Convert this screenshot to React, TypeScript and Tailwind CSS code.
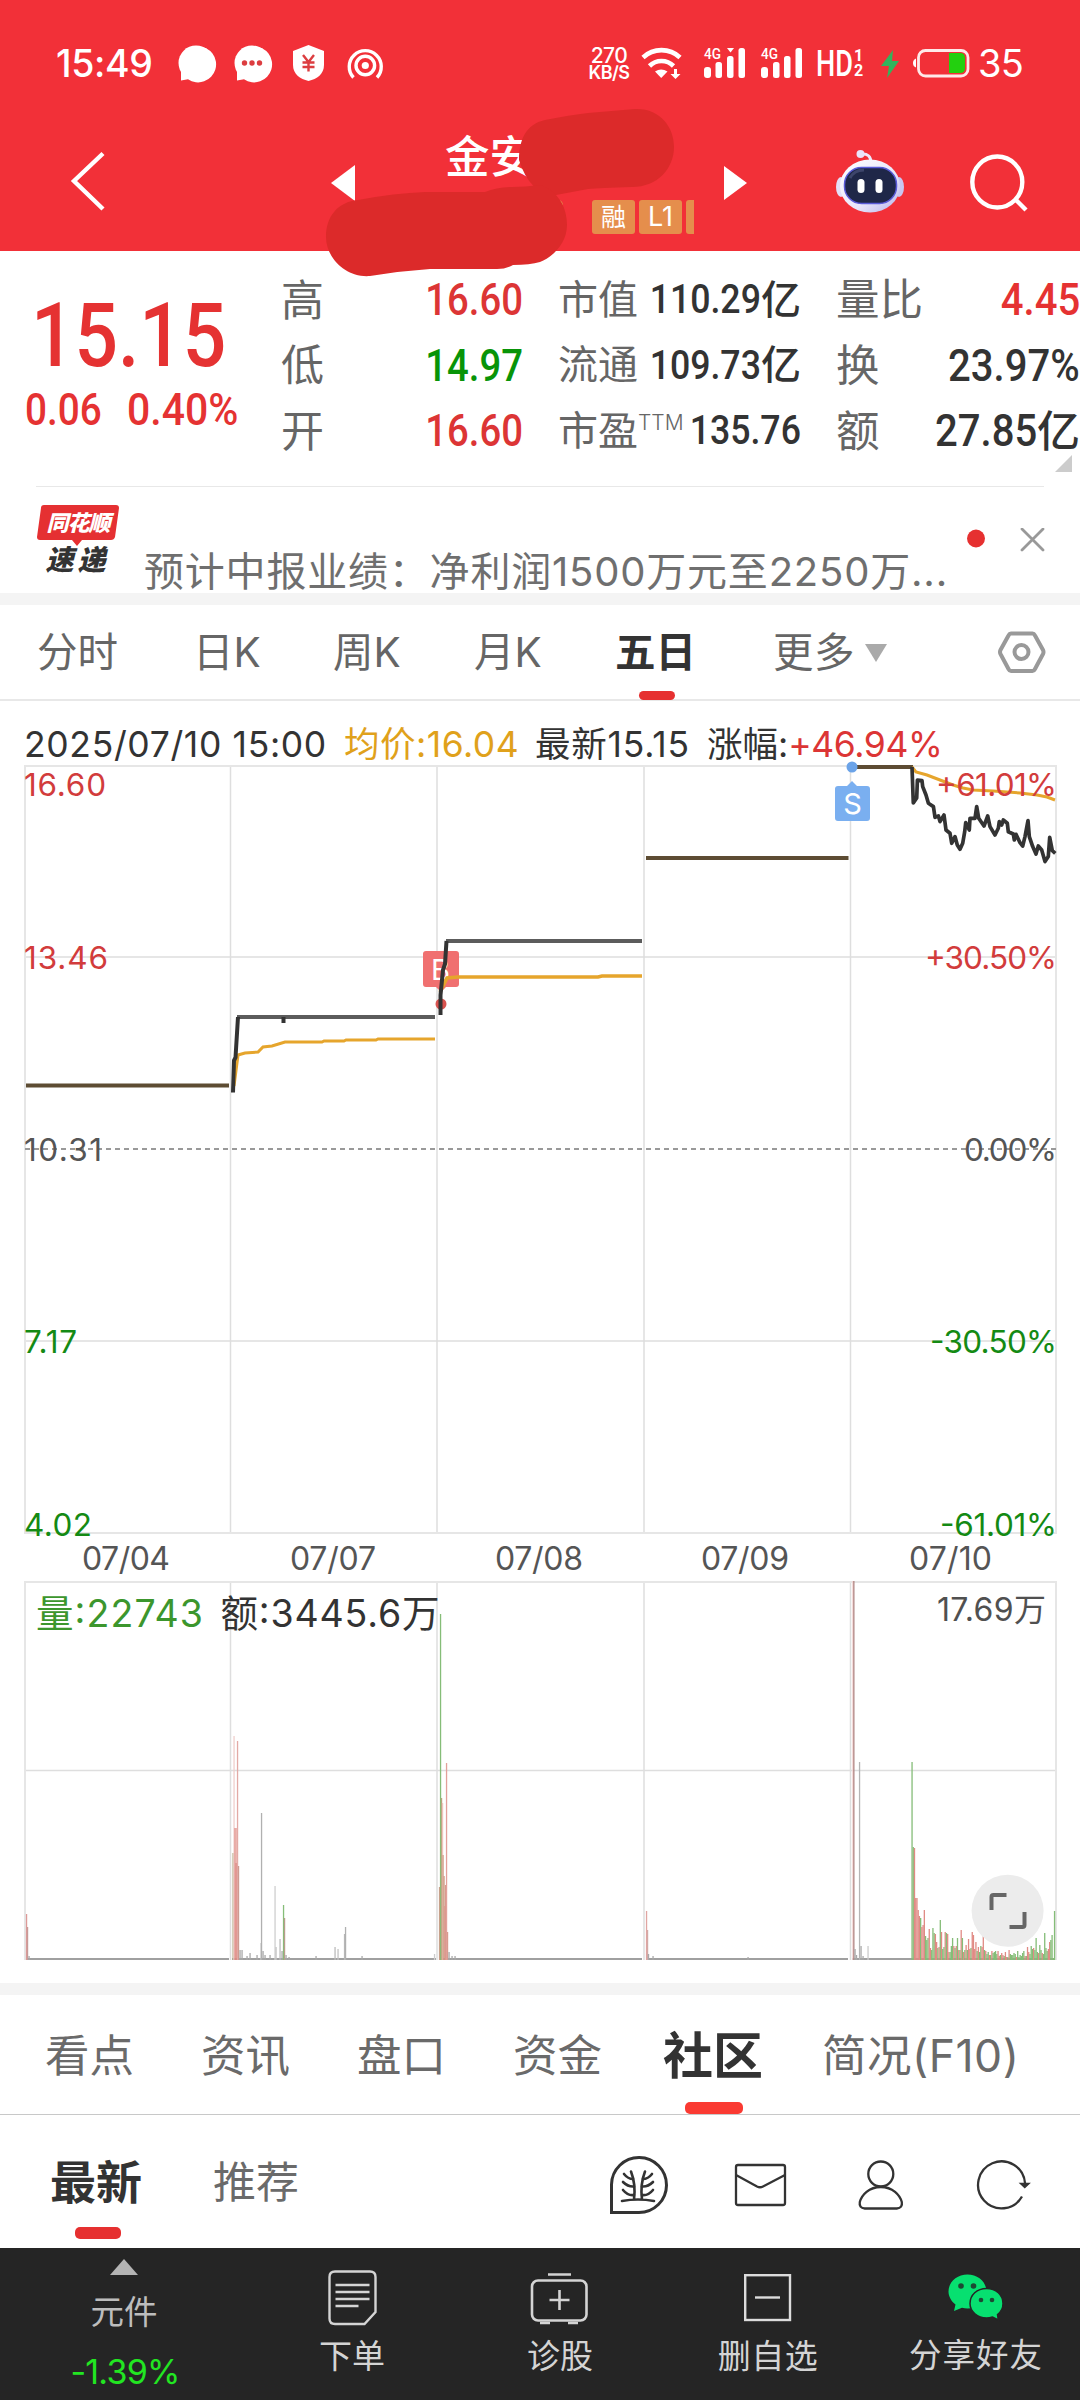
import React from "react";

type TBar = [number, number, string];

const RED = "#e08a84";
const GREEN = "#85bd78";
const GRAY = "#a9a9a9";

// x, height, color
const bars: TBar[] = [
  [26.5, 46, "#dd9a98"], [27.5, 33, "#c79a98"], [29, 4, GRAY],
  [233, 107, "#b9b08e"], [234, 224, "#f0cfcc"], [235, 132, RED], [236, 97, RED],
  [237, 132, RED], [237.5, 219, "#e3aaa5"], [238.5, 94, "#cf9a90"], [240, 10, GRAY],
  [242, 10, GRAY], [247, 4, GRAY], [250, 7, GRAY], [257, 5, GRAY], [261, 17, "#c9c9c9"],
  [261.5, 147, "#b0b0b0"], [263, 9, GRAY], [265, 5, GRAY], [270, 5, GRAY],
  [275, 74, "#cfcfcf"], [276, 13, "#c4c4c4"], [280, 21, "#bbbbbb"], [282, 9, GRAY],
  [283.5, 55, GREEN], [284.5, 42, "#b99d8c"], [286, 5, GRAY], [289, 3, GRAY],
  [316, 4, GRAY], [335, 13, "#bdbdbd"], [338, 11, "#c4c4c4"], [344.5, 26, "#b8b8b8"],
  [345.5, 33, "#b0b0b0"], [362, 4, GRAY], [434.5, 6, "#cccccc"],
  [439.5, 73, "#cf9f8e"], [440.5, 346, GREEN], [441.5, 162, "#b9a57e"],
  [442.5, 157, "#efc4bd"], [443, 105, "#cf9d86"], [444, 84, "#cf9d86"], [445, 54, RED],
  [445.5, 75, "#d99a8e"], [446.5, 197, "#e3a09a"], [447.5, 28, "#d99a8e"], [449, 8, GRAY],
  [452, 4, GRAY], [455, 4, GRAY],
  [646.5, 49, "#e0a5a2"], [647.5, 30, "#d3a9a6"], [648.5, 6, GRAY], [653, 4, GRAY],
  [748, 3, GRAY],
  [852.8, 379, "#f3d3d1"], [853.8, 379, "#b08482"], [855, 11, GRAY], [856.5, 5, GRAY],
  [859.5, 198, "#b5b5b5"], [861, 14, GRAY], [863, 4, GRAY], [868, 14, "#cccccc"],
];

// per minute volume after the limit-up opened on 07/10
const tail =
  "198g 113g 112r 62r 62r 50r 44r 42g 33r 35r 50r 24g 20g 22g 31r 12r 10g 32g 27g 26r 18r 12g 13r 40g 28r 11g 13g 28r 27g 26r 8r 8g 14g 22g 14r 12g 14r 22g 10r 10g 30r 22g 8r 10g 15r 10g 21r 11r 12g 28r 25r 11r 18r 9g 13r 8g 14g 13r 32r 10g 9r 6g 8g 5r 5g 9r 7g 8g 9g 6g 9r 4r 5g 7r 5r 4g 8r 3r 3g 10r 6g 5g 5g 7g 6g 3r 9g 3g 5g 4g 7g 9g 4r 4g 13r 8r 6g 14g 11g 12r 10g 22g 8g 7r 15g 10g 7r 6g 27g 12g 9g 11r 18r 20g 25g 2g 49g";
tail.split(" ").forEach((v, i, all) => {
  bars.push([
    912 + (i * 142.5) / (all.length - 1),
    parseInt(v),
    v.endsWith("g") ? GREEN : RED,
  ]);
});

const quotes = [
  ["高", "16.60", "text-[#dc3535]", "市值", "110.29", "亿", "量比", "4.45", "", "text-[#e53232]"],
  ["低", "14.97", "text-[#089408]", "流通", "109.73", "亿", "换", "23.97%", "", "text-[#333333]"],
  ["开", "16.60", "text-[#dc3535]", "市盈", "135.76", "", "额", "27.85", "亿", "text-[#333333]"],
];

const StatusBar = () => (
  <div className="flex h-[125px] items-start pt-[38px] text-white">
    <div className="ml-[56px] w-[118px] text-[37.500px] leading-[52px] tracking-[-0.4px] font-medium">
      15:49
    </div>
    <svg className="h-[50px] w-[220px]" viewBox="174 38 220 50" fill="none">
      <path d="M181 80.500V70a18 18 0 1 1 7 9.300z" fill="#fff" />
      <circle cx="196" cy="63" r="17.500" fill="#fff" />
      <path d="M237 80.500V70a18 18 0 1 1 7 9.300z" fill="#fff" />
      <circle cx="252" cy="63" r="17.500" fill="#fff" />
      <g fill="#dc3d40">
        <circle cx="244.500" cy="63" r="2.700" />
        <circle cx="252" cy="63" r="2.700" />
        <circle cx="259.500" cy="63" r="2.700" />
      </g>
      <path d="M308.500 45l15.500 6v14c0 9-7 14-15.500 16-8.500-2-15.500-7-15.500-16V51z" fill="#fff" />
      <path
        d="M303 55l5.500 7 5.500-7M308.500 62v9.500M302.500 62.500h12M302.500 67h12"
        stroke="#dc3d40"
        strokeWidth="2.400"
      />
      <g stroke="#fff" strokeWidth="3.400">
        <path d="M353.500 77.500a16 16 0 1 1 23.500 0" />
        <circle cx="365.300" cy="65.500" r="9.300" />
      </g>
      <circle cx="365.300" cy="65.500" r="3.600" fill="#fff" />
    </svg>
    <div className="ml-[192px] mt-[9px] w-[46px] text-center font-medium">
      <div className="text-[21px] leading-[17px] tracking-[-0.5px]">270</div>
      <div className="text-[18px] font-semibold leading-[17px] tracking-[-0.5px]">KB/S</div>
    </div>
    <svg className="h-[50px] w-[340px]" viewBox="632 38 340 50" fill="none">
      <g stroke="#fff" strokeWidth="4.600">
        <path d="M643 57.500a27 27 0 0 1 37 0" />
        <path d="M649.500 66a17 17 0 0 1 24 0" />
      </g>
      <path d="M655 71.500q6-4 12.500 0l-6.300 6.500z" fill="#fff" />
      <path d="M674 69h3v5h3.500l-5 5-5-5h3.500z" fill="#fff" />
      <g fill="#fff">
        <rect x="704" y="67" width="7" height="11" rx="3" />
        <rect x="715.500" y="62" width="6.500" height="16" rx="2.500" />
        <rect x="727" y="56" width="6.500" height="22" rx="2.500" />
        <path d="M727 48h7l-3.500 4.500z" />
        <rect x="738.500" y="48" width="6.500" height="30" rx="2.500" />
        <rect x="761" y="67" width="7" height="11" rx="3" />
        <rect x="773" y="62" width="6.500" height="16" rx="2.500" />
        <rect x="784" y="56" width="6.500" height="22" rx="2.500" />
        <rect x="795.500" y="48" width="6.500" height="30" rx="2.500" />
      </g>
      <g fill="#fff" fontFamily="Roboto" fontWeight="500">
        <text x="704" y="59" fontSize="15.500" textLength="17" lengthAdjust="spacingAndGlyphs">4G</text>
        <text x="761" y="59" fontSize="15.500" textLength="17" lengthAdjust="spacingAndGlyphs">4G</text>
        <text x="816" y="76" fontSize="36" textLength="37" lengthAdjust="spacingAndGlyphs">HD</text>
        <text x="854" y="61" fontSize="16" fontWeight="700">1</text>
        <text x="854" y="76" fontSize="16" fontWeight="700">2</text>
      </g>
      <path d="M893 50l-12 16h8l-2 12 12-17h-7z" fill="#33b35c" />
      <rect x="918.500" y="50.500" width="49.500" height="25.500" rx="7" stroke="#ffe9e9" strokeWidth="2.800" />
      <path d="M949 53h11q5 0 5 5v10q0 5-5 5h-11z" fill="#23d00f" />
      <path d="M916 58.500v9q-3-1-3-4.500t3-4.500z" fill="#fff" />
    </svg>
    <div className="ml-[6px] text-[38px] leading-[50px] tracking-[-0.8px]">35</div>
  </div>
);

const Header = () => (
  <header className="relative z-10 h-[251px] bg-[#f23038]">
    <StatusBar />
    <div className="flex h-[126px] text-white">
      <svg className="h-[126px] w-[445px]" viewBox="0 125 445 126" fill="none">
        <path d="M103 153.500L74 181l29 28" stroke="#fff" strokeWidth="4.400" />
        <path d="M355 165v36l-24-18z" fill="#fff" />
      </svg>
      <div className="w-[265px]">
        <div className="mt-[4px] h-[56px] text-[44.500px] font-medium leading-[56px]">金安</div>
        <div className="ml-[147px] mt-[15px] flex w-[102px] gap-[4px] overflow-hidden text-[25px] leading-[34px]">
          <span className="w-[43px] shrink-0 rounded-[3px] bg-[#e58e4c] text-center">融</span>
          <span className="w-[43px] shrink-0 rounded-[3px] bg-[#e58e4c] text-center text-[27px]">L1</span>
          <span className="h-[34px] w-[43px] shrink-0 rounded-[3px] bg-[#e58e4c]" />
        </div>
      </div>
      <svg className="h-[126px] w-[370px]" viewBox="710 125 370 126" fill="none">
        <defs>
          <linearGradient id="shell" x1="0" y1="0" x2="1" y2="1">
            <stop offset="0" stopColor="#ffffff" />
            <stop offset="0.600" stopColor="#e9e6fa" />
            <stop offset="1" stopColor="#b4b2ea" />
          </linearGradient>
        </defs>
        <path d="M724 166v34l23-17z" fill="#fff" />
        <path d="M861 154q10-1 10 9" stroke="#efe9fb" strokeWidth="3" />
        <circle cx="860.500" cy="154" r="4" fill="#eae4fa" />
        <ellipse cx="841" cy="187" rx="5" ry="10" fill="#e3dff8" />
        <ellipse cx="899" cy="187" rx="5" ry="10" fill="#c9c6f0" />
        <ellipse cx="870" cy="186" rx="30" ry="26.500" fill="url(#shell)" />
        <rect x="844.500" y="167.500" width="52" height="36" rx="17" fill="#1f2748" stroke="#5a5bd8" strokeWidth="1.500" />
        <path d="M850 178q4-8 14-8" stroke="#3d456b" strokeWidth="3" />
        <rect x="857.500" y="179" width="7" height="14" rx="3.500" fill="#fff" />
        <rect x="875.500" y="179" width="7" height="14" rx="3.500" fill="#fff" />
        <ellipse cx="997.300" cy="182" rx="25" ry="25.500" stroke="#fff" strokeWidth="4.400" />
        <path d="M1015 199l11 11" stroke="#fff" strokeWidth="4.400" />
      </svg>
    </div>
    <svg className="absolute left-[310px] top-[95px] h-[190px] w-[380px]" viewBox="310 95 380 190">
      <path d="M559 200q4 1 4 6z" fill="#e58e4c" />
      <g fill="#dc2a2a">
        <path d="M519 160C519 140 526 124 545 120Q570 115 588 113L635 109C660 108 674 127 674 147C674 168 658 187 632 187Q600 188 588 189L556 195Q530 195 519 160z" />
        <path d="M326 237C326 216 338 202 358 200Q395 193 425 192H485Q497 187 512 187Q525 187 540 185C556 190 567 205 567 225C567 243 553 257 540 262Q530 265 513 265Q506 269 497 269H430Q400 271 370 276C346 278 326 258 326 237z" />
      </g>
    </svg>
  </header>
);

const QuotePanel = () => (
  <section className="relative flex h-[235px] pt-[16px]">
    <div className="w-[281px] shrink-0 text-[#e53232]">
      <div className="ml-[31px] mt-[27px] origin-left scale-x-[.86] font-[Roboto] text-[89px] font-medium leading-[84px] whitespace-nowrap">
        15.15
      </div>
      <div className="mt-[1px] flex h-[62px] items-center font-[Roboto] text-[44px] font-medium leading-[44px]">
        <span className="ml-[25px] w-[102px] origin-left scale-x-[.88]">0.06</span>
        <span className="origin-left scale-x-[.93]">0.40%</span>
      </div>
    </div>
    <div className="grid h-[197px] flex-1 grid-rows-3">
      {quotes.map((q) => (
        <div key={q[0]} className="flex items-center whitespace-nowrap text-[#666666]">
          <span className="w-[43px] shrink-0 text-[43px]">{q[0]}</span>
          <span className={`w-[199px] shrink-0 origin-right scale-x-[.87] text-right font-[Roboto] text-[44px] font-medium ${q[2]}`}>
            {q[1]}
          </span>
          <span className="ml-[35px] text-[40px]">{q[3]}</span>
          {!q[5] && <span className="-mt-[16px] w-0 text-[21px] font-light">TTM</span>}
          <span className="flex flex-1 items-center justify-end text-[#333333]">
            <span className="-ml-[20px] origin-right scale-x-[.87] font-[Roboto] text-[41px] font-medium">{q[4]}</span>
            {q[5] && <span className="text-[40px] font-medium">{q[5]}</span>}
          </span>
          <span className="ml-[35px] w-[89px] shrink-0 text-[43.500px]">{q[6]}</span>
          <span className={`flex w-[155px] shrink-0 items-center justify-end ${q[9]}`}>
            <span className="origin-right scale-x-[.91] font-[Roboto] text-[44px] font-medium">{q[7]}</span>
            {q[8] && <span className="text-[43px] font-medium">{q[8]}</span>}
          </span>
        </div>
      ))}
    </div>
    <svg className="absolute left-[1054px] top-[203px] h-[18px] w-[18px]" viewBox="0 0 18 18">
      <path d="M18 1v17H1z" fill="#cccccc" />
    </svg>
  </section>
);

const NewsBar = () => (
  <section className="h-[107px] text-[#6f6f6f]">
    <div className="mx-[36px] h-px bg-[#e8e8e8]" />
    <div className="flex h-[106px]">
      <div className="ml-[37px] mt-[18px] w-[82px] shrink-0">
        <div className="relative">
          <svg className="absolute h-[42px] w-[82px]" viewBox="0 0 82 42">
            <path d="M7 0h72q3 0 3 3l-4 29q-1 3-4 3H45l-5 6-5-6H3q-3 0-3-3L4 3q0-3 3-3z" fill="#e53032" />
          </svg>
          <div className="relative pt-[1px] text-center text-[22px] font-black italic leading-[34px] tracking-[-1px] text-white">
            同花顺
          </div>
        </div>
        <div className="-ml-[5px] mt-[5px] flex justify-center gap-[4px] text-[28px] font-black italic leading-[30px] text-[#333333]">
          <span>速</span>
          <span>递</span>
        </div>
      </div>
      <div className="ml-[25px] mt-[63px] w-[806px] shrink-0 whitespace-nowrap text-[40px] leading-[44px] tracking-[0.8px]">
        预计中报业绩：净利润1500万元至2250万...
      </div>
      <svg className="ml-[16px] mt-[41px] h-[24px] w-[80px] shrink-0" viewBox="966 528 80 24" fill="none">
        <circle cx="976" cy="538.500" r="9" fill="#e63030" />
        <path d="M1022 529l21 21m0-21l-21 21" stroke="#999999" strokeWidth="2.800" strokeLinecap="round" />
      </svg>
    </div>
  </section>
);

const PeriodTabs = () => (
  <nav className="flex h-[96px] border-b-2 border-[#e8e8e8] pl-[37px] text-[40.500px] leading-[96px] text-[#666666]">
    <span className="w-[156px]">分时</span>
    <span className="w-[140px]">日K</span>
    <span className="w-[141px]">周K</span>
    <span className="w-[141px]">月K</span>
    <span className="w-[158px] font-bold text-[#333333]">
      五日
      <i className="-mt-[10px] ml-[24px] block h-[9px] w-[36px] rounded-full bg-[#e63030]" />
    </span>
    <span className="w-[90px] tracking-[0.5px]">更多</span>
    <svg className="h-[94px] w-[190px]" viewBox="863 605 190 94" fill="none">
      <path d="M865 644h22l-11 18z" fill="#aaaaaa" />
      <path
        d="M1011 633.500h21.500q1.500 0 2.500 2l8 14.500q1 2 0 4l-8 15q-1 2-2.500 2H1011q-1.500 0-2.500-2l-8-15q-1-2 0-4l8-14.500q1-2 2.500-2z"
        stroke="#999999"
        strokeWidth="4"
      />
      <circle cx="1021.500" cy="652" r="7" stroke="#999999" strokeWidth="4" />
    </svg>
  </nav>
);

const PriceChart = () => (
  <svg className="block h-[816px] w-[1080px] overflow-visible" viewBox="0 765 1080 816" fill="none">
    <g stroke="#dedede" strokeWidth="1.500">
      <path d="M230.500 766V1533M437 766V1533M644 766V1533M850.500 766V1533M25 957H1056M25 1341H1056" />
      <rect x="25" y="766" width="1031" height="767" stroke="#e6e6e6" strokeWidth="2" />
      <path d="M25 1149H1056" stroke="#999999" strokeWidth="2" strokeDasharray="5 4" />
    </g>
    <path d="M26 1085.500H229M646 858H848.500M853 767H913" stroke="#5d4c33" strokeWidth="4" />
    <g stroke="#e6a52c" strokeWidth="3">
      <path d="M234 1086l4-31 7-2 13-1 5-5 9-1 13-4h37l2-1h20l2-1h30l2-1H435" />
      <path d="M912 767l4 5 11 3 13 5 13 5 10 3 10 2 20 1 27 2 17 2 10 2 8 3" />
    </g>
    <circle cx="441" cy="1004" r="5.500" fill="#d9534f" />
    <path d="M426 951h30q3 0 3 3v30q0 3-3 3h-10l-5 5-5-5h-10q-3 0-3-3v-30q0-3 3-3z" fill="#f07070" />
    <text x="431" y="980" fontSize="29" fill="#fff">B</text>
    <path d="M440 992l7-14 11-1H598l4-1h40" stroke="#e6a52c" strokeWidth="3.500" />
    <g stroke="#333333" strokeWidth="4">
      <path d="M237 1017H435M446 941H642" stroke="#5c5c5c" />
      <path d="M233 1092.500l1-32 1.500-3 2.500-40.500M283.500 1017v6M440.500 1015v-20l2.500-25 2-6 1.500-23" />
      <path
        strokeLinejoin="round"
        strokeWidth="3.700"
        d="M912 767l1.300 36 3.400-5 .7-18 4.600.6.700 6 3.300 8.400 2.400 8.300 5 3.300 1.600 10.700 3.400-1.300 1.600 5.600 4-6.600 2 15 4 3.300 1.700 10 3.300-6.700 2.300 8.400 2.700 4.300 2.700-6 2-11.700 1-9 3.600 7.400.7-11.700h5l1.700-11.700 2 11.700 5.300 7.700 3.700-10 2.300 10.600 5 8.400 3.300-6.700 1-6.700 2.400 3.400 1.600-5 4 3.300 1 8.400 5 2.300 1 6 1.700-5.700 4 8.400 2.700 3.300 2.300-9.400 3-16 1.300 16 3.400 10 3.300 7.400 2.300-8 3.400 4 3.300 11.600 3.300-5 1.400-19.300 2.600 13.300 3 2.700"
      />
    </g>
    <circle cx="852" cy="767" r="5.500" fill="#6ba3e8" />
    <path d="M838 786h9l5-5 5 5h10q3 0 3 3v29q0 3-3 3h-29q-3 0-3-3v-29q0-3 3-3z" fill="#7aaff0" />
    <text x="852.500" y="814" fontSize="29" fill="#fff" textAnchor="middle">S</text>
    <g fontSize="31.500" fill="#d23c3c">
      <text x="24" y="796" textLength="82">16.60</text>
      <text x="24" y="968.500" textLength="84">13.46</text>
      <text x="24" y="1160.500" fill="#555555" textLength="78">10.31</text>
      <g fill="#148a14">
        <text x="24" y="1352.500" textLength="53">7.17</text>
        <text x="24" y="1535.500" textLength="68">4.02</text>
      </g>
      <g textAnchor="end">
        <text x="1057" y="796" textLength="121">+61.01%</text>
        <text x="1057" y="968.500" textLength="132">+30.50%</text>
        <text x="1057" y="1160.500" fill="#555555" textLength="93">0.00%</text>
        <g fill="#148a14">
          <text x="1057" y="1352.500" textLength="127">-30.50%</text>
          <text x="1057" y="1535.500" textLength="117">-61.01%</text>
        </g>
      </g>
    </g>
    <g fontSize="32" fill="#555555" textAnchor="middle">
      <text x="126" y="1570" textLength="88">07/04</text>
      <text x="333" y="1570" textLength="86">07/07</text>
      <text x="539" y="1570" textLength="88">07/08</text>
      <text x="745" y="1570" textLength="88">07/09</text>
      <text x="950.500" y="1570" textLength="83">07/10</text>
    </g>
  </svg>
);

const VolumeChart = () => (
  <svg className="block h-[402px] w-[1080px]" viewBox="0 1581 1080 402" fill="none">
    <g stroke="#dedede" strokeWidth="1.500">
      <path d="M230.500 1582V1960M437 1582V1960M644 1582V1960M850.500 1582V1960M25 1770.500H1056" />
      <path d="M25 1960V1582H1056V1960" stroke="#e6e6e6" strokeWidth="2" />
    </g>
    <path d="M26 1959H229M232 1959H436M439 1959H642M646 1959H848M852 1959H1055" stroke="#a0a0a0" strokeWidth="2" />
    {bars.map(([x, h, color], i) => (
      <rect key={i} x={x - 0.6} y={1960 - h} width="1.300" height={h} fill={color} />
    ))}
    <g fontSize="37.500" fill="#333333">
      <text x="36" y="1627" fill="#3c962d" textLength="167">量:22743</text>
      <text x="220.500" y="1627" textLength="219">额:3445.6万</text>
      <text x="1046" y="1621" fontSize="32" fill="#505050" textAnchor="end" textLength="109">17.69万</text>
    </g>
    <circle cx="1007.600" cy="1910.700" r="36" fill="#ececec" />
    <path d="M991.500 1910v-13q0-2 2-2h13M1024.500 1912v13q0 2-2 2h-13" stroke="#666666" strokeWidth="4" />
  </svg>
);

const SectionTabs = () => (
  <nav className="flex h-[120px] border-b border-[#c8c8c8] pl-[45px] text-[44.500px] leading-[123px] text-[#6a6a6a]">
    <span className="w-[156px]">看点</span>
    <span className="w-[156px]">资讯</span>
    <span className="w-[156px]">盘口</span>
    <span className="w-[150px]">资金</span>
    <span className="w-[159px] text-[50px] font-bold text-[#333333]">
      社区
      <i className="-mt-[16px] ml-[22px] block h-[12px] w-[58px] rounded-[5px] bg-[#fa3a32]" />
    </span>
    <span className="whitespace-nowrap tracking-[0.5px]">简况(F10)</span>
  </nav>
);

const CommunityBar = () => (
  <div className="flex h-[133px] text-[#333333]">
    <div className="ml-[50px] w-[163px] text-[46px] font-bold leading-[134px]">
      最新
      <i className="-mt-[22px] ml-[25px] block h-[12px] w-[46px] rounded-[5px] bg-[#e63030]" />
    </div>
    <div className="w-[387px] text-[43px] leading-[134px] text-[#6a6a6a]">推荐</div>
    <svg className="h-[133px] w-[440px]" viewBox="600 2115 440 133" fill="none" stroke="#333333" strokeWidth="2.300">
      <path d="M611.500 2212.500v-28a27.500 27.500 0 1 1 27.500 28z" strokeWidth="3" />
      <g strokeWidth="2.600" strokeLinecap="round">
        <path d="M622 2201q16-3 32 0M634 2199.500q2-15-3-28M642 2199.500q-2-15 3-28" />
        <path d="M624 2174q4 5 9 5M623 2182q5 5 11 4.500M623 2190q5 6 11 5M652 2174q-4 5-9 5M653 2182q-5 5-11 4.500M653 2190q-5 6-11 5" />
      </g>
      <rect x="736" y="2165" width="49" height="40" rx="2" />
      <path d="M736 2175l21 11.500q3 1.500 6 0l22-11.500" />
      <ellipse cx="880.800" cy="2174" rx="12.500" ry="12.500" />
      <path d="M880.800 2187c-12 0-19 8-21 15q-1 6 5 6.500h32q6-.5 5-6.500c-2-7-9-15-21-15z" />
      <path d="M1022 2196.500A23.500 23.500 0 1 1 1025 2183" />
      <path d="M1020.500 2183.500h8.500l-4.250 4z" fill="#333333" strokeWidth="1.500" />
    </svg>
  </div>
);

const BottomBar = () => (
  <footer className="flex h-[152px] bg-[#252525] text-center text-[32.500px] leading-[36px] text-[#d4d4d4]">
    <div className="w-[248px] pt-[11px]">
      <svg className="mx-auto h-[16px] w-[28px]" viewBox="0 0 28 16">
        <path d="M14 0l14 16H0z" fill="#b4b4b4" />
      </svg>
      <div className="mt-[19px] text-[33.500px] text-[#bdbdbd]">元件</div>
      <div className="ml-[2px] mt-[24px] text-[34px] tracking-[-0.8px] text-[#22e622]">-1.39%</div>
    </div>
    <div className="w-[208px] pt-[19px]">
      <svg className="mx-auto h-[60px] w-[60px]" viewBox="322 2267 60 60" fill="none" stroke="#d4d4d4" strokeWidth="2.400">
        <path d="M335 2271.500h35q5.500 0 5.500 5.500v35l-11 12h-29.500q-5.500 0-5.500-5.500V2277q0-5.500 5.500-5.500z" />
        <path d="M335.500 2285h34M335.500 2292h34M335.500 2299h34M335.500 2306h23" />
      </svg>
      <div className="mt-[11px] text-[33px]">下单</div>
    </div>
    <div className="w-[208px] pt-[19px]">
      <svg className="mx-auto h-[60px] w-[60px]" viewBox="530 2267 60 60" fill="none" stroke="#d4d4d4" strokeWidth="2.600">
        <rect x="532" y="2280.500" width="54.500" height="40" rx="6" />
        <path d="M548 2274.500h23M559.500 2290v20M549.500 2300h20M540 2323h10M568 2323h10" />
      </svg>
      <div className="mt-[11px] text-[33px]">诊股</div>
    </div>
    <div className="w-[208px] pt-[19px]">
      <svg className="mx-auto h-[60px] w-[60px]" viewBox="738 2267 60 60" fill="none" stroke="#dcdcdc" strokeWidth="2.400">
        <rect x="745.200" y="2275.200" width="44.800" height="44.800" />
        <path d="M755 2297.500h25" />
      </svg>
      <div className="mt-[11px] tracking-[0.5px]">
        <span className="text-[33px]">删自选</span>
      </div>
    </div>
    <div className="w-[208px] pt-[19px]">
      <svg className="mx-auto h-[60px] w-[60px]" viewBox="946 2267 60 60">
        <path
          d="M967.500 2274.500c10.500 0 19 7.500 19 17s-8.500 17-19 17q-3 0-5.500-.8l-8 3.300 1.500-6.500c-4-3-7-7.800-7-13 0-9.500 8.500-17 19-17z"
          fill="#07e070"
        />
        <path
          d="M986.500 2288.500c9.500 0 16.500 6.500 16.500 15 0 4.500-2 8.500-5.500 11l.8 5.500-5.800-3q-3 1-6 1c-9 0-16.500-6.500-16.500-14.500 0-8.500 7-15 16.500-15z"
          fill="#07e070"
          stroke="#252525"
          strokeWidth="1.500"
        />
        <g fill="#1c4a33">
          <circle cx="961" cy="2286" r="2.800" />
          <circle cx="973.500" cy="2286" r="2.800" />
          <circle cx="981" cy="2300" r="2.300" />
          <circle cx="992" cy="2300" r="2.300" />
        </g>
      </svg>
      <div className="mt-[11px] tracking-[1px]">分享好友</div>
    </div>
  </footer>
);

const App: React.FC = () => {
  return (
    <div className="h-[2400px] w-[1080px] overflow-hidden bg-white font-['Inter','Noto_Sans_CJK_SC',sans-serif]">
      <Header />
      <QuotePanel />
      <NewsBar />
      <div className="h-[12px] bg-[#f4f4f4]" />
      <PeriodTabs />
      <div className="flex h-[64px] whitespace-nowrap pl-[24px] pt-[15px] text-[35.500px] leading-[58px] text-[#333333]">
        <span className="w-[320px] tracking-[0.65px]">2025/07/10 15:00</span>
        <span className="w-[191px] tracking-[0.5px] text-[#e0a11b]">均价:16.04</span>
        <span className="w-[172px] tracking-[0.8px]">最新15.15</span>
        <span>
          涨幅:<span className="tracking-[-0.4px] text-[#dc3535]">+46.94%</span>
        </span>
      </div>
      <PriceChart />
      <VolumeChart />
      <div className="h-[12px] bg-[#f4f4f4]" />
      <SectionTabs />
      <CommunityBar />
      <BottomBar />
    </div>
  );
};

export default App;
